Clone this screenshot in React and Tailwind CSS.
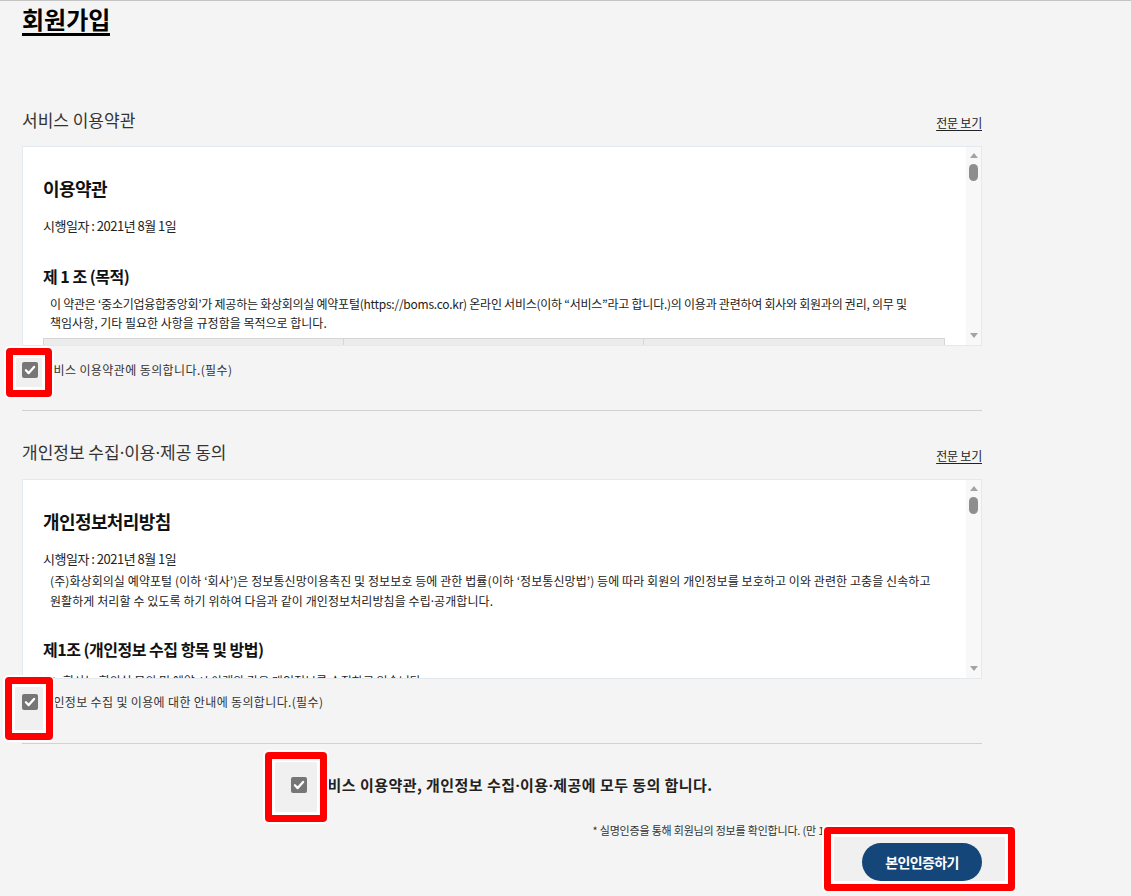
import React from "react";

const Dot = () => <span className="font-['Noto_Sans',sans-serif]">·</span>;

const Check = () => (
  <span className="relative z-20 flex h-4 w-4 shrink-0 items-center justify-center rounded-[2px] bg-[#767676]">
    <svg viewBox="0 0 16 16" className="h-4 w-4">
      <path d="M3.9 8.3 L6.7 11.1 L12.1 4.9" fill="none" stroke="white" strokeWidth="2.3" strokeLinecap="round" strokeLinejoin="round" />
    </svg>
  </span>
);

const Scrollbar = () => (
  <div className="flex w-[15px] shrink-0 flex-col items-center bg-[#f8f8f8] pt-[6px] pb-[7px]">
    <div className="h-0 w-0 border-x-[4px] border-b-[5px] border-x-transparent border-b-[#a3a3a3]" />
    <div className="mt-[6px] h-[17px] w-[9px] rounded-full bg-[#8e8e8e]" />
    <div className="flex-1" />
    <div className="h-0 w-0 border-x-[4px] border-t-[5px] border-x-transparent border-t-[#a3a3a3]" />
  </div>
);

const SectionHeader = ({ children }) => (
  <div className="flex items-end justify-between">
    <h2 className="text-[17px] leading-[24px] tracking-[0px] text-[#333]">{children}</h2>
    <a className="cursor-pointer text-[12px] leading-[18px] tracking-[-0.2px] text-[#222] underline underline-offset-[2px]">전문 보기</a>
  </div>
);

const RedBox = ({ className }) => (
  <div
    className={`pointer-events-none absolute z-10 rounded-[4px] border-[7px] border-[#ff0000] bg-[#f0f0f0] shadow-[0_0_0_2px_#ffffff,inset_0_0_0_3px_#ffffff] ${className}`}
  />
);

export default function App() {
  return (
    <div className="relative min-h-[896px] border-t border-[#c4c4c4] bg-[#f4f4f4] font-['Noto_Sans_CJK_KR','Noto_Sans',sans-serif] text-[#333]">
      <div className="ml-[22px] w-[960px]">
        <h1 className="mt-[4px] inline-block border-b-[3px] border-black text-[24px] font-bold leading-[28px] tracking-[0px] text-black">
          회원가입
        </h1>

        {/* Section 1 */}
        <div className="mt-[72px]">
          <SectionHeader>서비스 이용약관</SectionHeader>
        </div>
        <div className="mt-[14px] flex h-[200px] border border-[#e4e9ee] bg-white">
          <div className="flex-1 overflow-hidden pl-[20px] pr-[21px] text-[#222]">
            <h3 className="pt-[27px] text-[18px] font-bold leading-[28px] tracking-[-0.6px] text-[#111]">이용약관</h3>
            <p className="mt-[14px] text-[13px] leading-[20px] tracking-[-0.5px]">시행일자 : 2021년 8월 1일</p>
            <h4 className="mt-[28px] text-[16px] font-bold leading-[24px] tracking-[-0.5px] text-[#111]">제 1 조 (목적)</h4>
            <div className="mt-[6px] pl-[7px] text-[12px] leading-[19px]">
              <p className="whitespace-nowrap tracking-[-0.25px]">
                이 약관은 ‘중소기업융합중앙회’가 제공하는 화상회의실 예약포털(https://boms.co.kr) 온라인 서비스(이하 “서비스”라고 합니다.)의 이용과 관련하여 회사와 회원과의 권리, 의무 및
              </p>
              <p className="whitespace-nowrap tracking-[0px]">책임사항, 기타 필요한 사항을 규정함을 목적으로 합니다.</p>
            </div>
            <div className="mt-[6px] grid grid-cols-3 border border-[#d6d6d6] bg-[#ececec]">
              <div className="h-[30px] border-r border-[#d6d6d6]" />
              <div className="h-[30px] border-r border-[#d6d6d6]" />
              <div className="h-[30px]" />
            </div>
          </div>
          <Scrollbar />
        </div>
        <label className="mt-[16px] flex items-center gap-[4px]">
          <Check />
          <span className="text-[12px] leading-[16px] tracking-[0.4px] text-[#333]">서비스 이용약관에 동의합니다.(필수)</span>
        </label>

        <div className="mt-[32px] h-px bg-[#d2d2d2]" />

        {/* Section 2 */}
        <div className="mt-[29px]">
          <SectionHeader>
            개인정보 수집<Dot />이용<Dot />제공 동의
          </SectionHeader>
        </div>
        <div className="mt-[14px] flex h-[200px] border border-[#e4e9ee] bg-white">
          <div className="flex-1 overflow-hidden pl-[20px] pr-[21px] text-[#222]">
            <h3 className="pt-[27px] text-[18px] font-bold leading-[28px] tracking-[-0.6px] text-[#111]">개인정보처리방침</h3>
            <p className="mt-[14px] text-[13px] leading-[20px] tracking-[-0.5px]">시행일자 : 2021년 8월 1일</p>
            <div className="mt-[2px] pl-[7px] text-[12px] leading-[20px] tracking-[0.08px]">
              <p className="whitespace-nowrap">
                (주)화상회의실 예약포털 (이하 ‘회사’)은 정보통신망이용촉진 및 정보보호 등에 관한 법률(이하 ‘정보통신망법’) 등에 따라 회원의 개인정보를 보호하고 이와 관련한 고충을 신속하고
              </p>
              <p className="whitespace-nowrap">
                원활하게 처리할 수 있도록 하기 위하여 다음과 같이 개인정보처리방침을 수립<Dot />공개합니다.
              </p>
            </div>
            <h4 className="mt-[25px] text-[16px] font-bold leading-[24px] tracking-[-0.5px] text-[#111]">제1조 (개인정보 수집 항목 및 방법)</h4>
            <p className="mt-[10px] whitespace-nowrap pl-[7px] text-[12px] leading-[20px] tracking-[0px]">
              1. 회사는 회의실 문의 및 예약 시 아래와 같은 개인정보를 수집하고 있습니다.
            </p>
          </div>
          <Scrollbar />
        </div>
        <label className="mt-[15px] flex items-center gap-[4px]">
          <Check />
          <span className="text-[12px] leading-[16px] tracking-[0.35px] text-[#333]">개인정보 수집 및 이용에 대한 안내에 동의합니다.(필수)</span>
        </label>

        <div className="mt-[33px] h-px bg-[#d2d2d2]" />

        {/* All agree */}
        <label className="mt-[32px] flex items-center justify-center gap-[6px]">
          <Check />
          <span className="text-[15px] font-bold leading-[18px] tracking-[0.45px] text-[#222]">
            서비스 이용약관, 개인정보 수집<Dot />이용<Dot />제공에 모두 동의 합니다.
          </span>
        </label>

        <p className="mt-[28px] text-right text-[11px] leading-[16px] tracking-[-0.2px] text-[#333]">
          * 실명인증을 통해 회원님의 정보를 확인합니다. (만 14세 이상만 회원가입이 가능합니다.)
        </p>
        <div className="mt-[5px] flex justify-end">
          <button className="relative z-20 h-[38px] w-[120px] rounded-full bg-[#144679] text-[14px] font-bold tracking-[-0.6px] text-white">
            본인인증하기
          </button>
        </div>
      </div>

      <RedBox className="left-[6px] top-[347px] h-[49px] w-[46px]" />
      <RedBox className="left-[5px] top-[676px] h-[63px] w-[48px]" />
      <RedBox className="left-[265px] top-[751px] h-[70px] w-[62px]" />
      <RedBox className="left-[824px] top-[826px] h-[64px] w-[191px]" />
    </div>
  );
}
